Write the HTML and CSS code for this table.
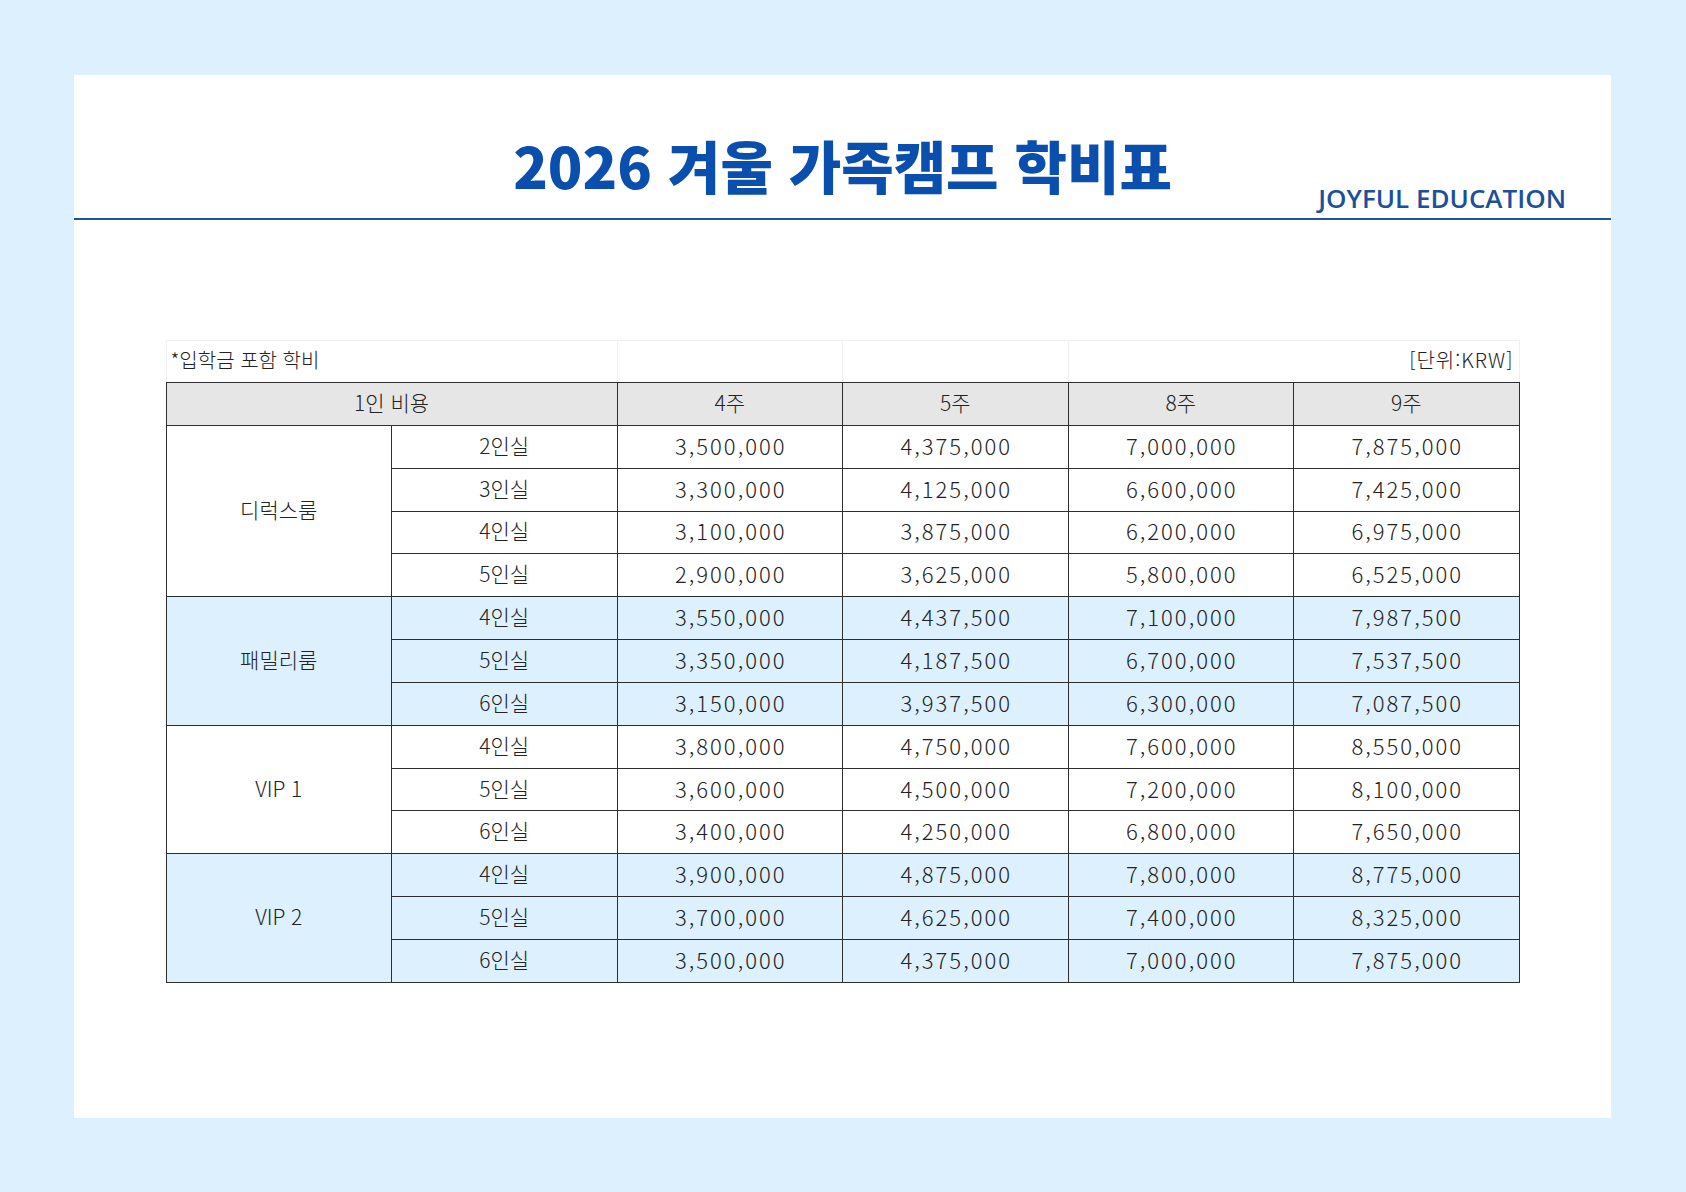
FILE: index.html
```html
<!DOCTYPE html>
<html lang="ko">
<head>
<meta charset="utf-8">
<title>2026 겨울 가족캠프 학비표</title>
<link rel="stylesheet" href="styles.css">
</head>
<body>
<main class="card">
  <header class="head">
    <div class="spacer"></div>
    <h1 class="title">2026 겨울 가족캠프 학비표</h1>
    <div class="brand">JOYFUL EDUCATION</div>
  </header>
  <table class="fees">
    <colgroup>
      <col class="c"><col class="c"><col class="c"><col class="c"><col class="c"><col class="c">
    </colgroup>
    <tr class="note">
      <td colspan="2" class="left">*입학금 포함 학비</td>
      <td></td>
      <td></td>
      <td colspan="2" class="right">[단위:KRW]</td>
    </tr>
    <tr class="th">
      <td colspan="2">1인 비용</td>
      <td>4주</td><td>5주</td><td>8주</td><td>9주</td>
    </tr>
    <tr>
      <td rowspan="4">디럭스룸</td>
      <td>2인실</td><td class="n">3,500,000</td><td class="n">4,375,000</td><td class="n">7,000,000</td><td class="n">7,875,000</td>
    </tr>
    <tr><td>3인실</td><td class="n">3,300,000</td><td class="n">4,125,000</td><td class="n">6,600,000</td><td class="n">7,425,000</td></tr>
    <tr><td>4인실</td><td class="n">3,100,000</td><td class="n">3,875,000</td><td class="n">6,200,000</td><td class="n">6,975,000</td></tr>
    <tr><td>5인실</td><td class="n">2,900,000</td><td class="n">3,625,000</td><td class="n">5,800,000</td><td class="n">6,525,000</td></tr>
    <tr class="hl">
      <td rowspan="3">패밀리룸</td>
      <td>4인실</td><td class="n">3,550,000</td><td class="n">4,437,500</td><td class="n">7,100,000</td><td class="n">7,987,500</td>
    </tr>
    <tr class="hl"><td>5인실</td><td class="n">3,350,000</td><td class="n">4,187,500</td><td class="n">6,700,000</td><td class="n">7,537,500</td></tr>
    <tr class="hl"><td>6인실</td><td class="n">3,150,000</td><td class="n">3,937,500</td><td class="n">6,300,000</td><td class="n">7,087,500</td></tr>
    <tr>
      <td rowspan="3" class="vip">VIP 1</td>
      <td>4인실</td><td class="n">3,800,000</td><td class="n">4,750,000</td><td class="n">7,600,000</td><td class="n">8,550,000</td>
    </tr>
    <tr><td>5인실</td><td class="n">3,600,000</td><td class="n">4,500,000</td><td class="n">7,200,000</td><td class="n">8,100,000</td></tr>
    <tr><td>6인실</td><td class="n">3,400,000</td><td class="n">4,250,000</td><td class="n">6,800,000</td><td class="n">7,650,000</td></tr>
    <tr class="hl">
      <td rowspan="3" class="vip">VIP 2</td>
      <td>4인실</td><td class="n">3,900,000</td><td class="n">4,875,000</td><td class="n">7,800,000</td><td class="n">8,775,000</td>
    </tr>
    <tr class="hl"><td>5인실</td><td class="n">3,700,000</td><td class="n">4,625,000</td><td class="n">7,400,000</td><td class="n">8,325,000</td></tr>
    <tr class="hl"><td>6인실</td><td class="n">3,500,000</td><td class="n">4,375,000</td><td class="n">7,000,000</td><td class="n">7,875,000</td></tr>
  </table>
</main>
</body>
</html>
```
FILE: styles.css
```css
html, body {
  margin: 0;
  padding: 0;
}
body {
  background: #ddf0fd;
  padding: 75px 75px 74px 74px;
  font-family: "Noto Sans CJK KR", "Noto Sans", sans-serif;
  color: #222222;
}
.card {
  width: 1537px;
  height: 1043px;
  background: #ffffff;
  box-sizing: border-box;
}
.head {
  display: grid;
  grid-template-columns: 1fr auto 1fr;
  align-items: end;
  padding: 60px 45px 7px;
  border-bottom: 2px solid #1f5499;
}
.title {
  margin: 0 0 18px;
  font-family: "Noto Sans CJK KR", sans-serif;
  font-weight: 900;
  font-size: 57px;
  line-height: 58px;
  letter-spacing: 0;
  color: #0b4fae;
  white-space: nowrap;
}
.brand {
  justify-self: end;
  font-family: "Open Sans", "Noto Sans", sans-serif;
  font-weight: 600;
  font-size: 26px;
  line-height: 26px;
  color: #1c4f9c;
  white-space: nowrap;
}
.fees {
  margin: 120px auto 0;
  width: 1354px;
  border-collapse: collapse;
  table-layout: fixed;
}
.fees td {
  height: 42.85px;
  padding: 0 0 4px;
  box-sizing: border-box;
  border: 1px solid #2e2e2e;
  text-align: center;
  vertical-align: middle;
  font-size: 21px;
  font-weight: 300;
  line-height: 22px;
  color: #222222;
}
.fees td.n {
  font-size: 22px;
  letter-spacing: 2px;
  text-indent: 2px;
}
.fees .note td {
  height: 42px;
  padding: 0 0 4px;
  border: 1px solid #f1f1f1;
  border-bottom-color: #2e2e2e;
  font-size: 20px;
}
.fees .note td.left {
  text-align: left;
  padding-left: 4px;
}
.fees .note td.right {
  text-align: right;
  padding-right: 5px;
  letter-spacing: 1px;
}
.fees .th td {
  background: #e6e6e6;
}
.fees .hl td {
  background: #dcf0fd;
}
```
